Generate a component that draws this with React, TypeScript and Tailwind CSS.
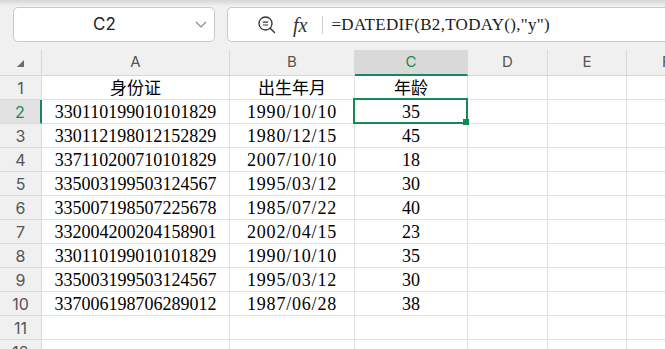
import React from 'react'

const rows = [
  ['330110199010101829', '1990/10/10', '35'],
  ['330112198012152829', '1980/12/15', '45'],
  ['337110200710101829', '2007/10/10', '18'],
  ['335003199503124567', '1995/03/12', '30'],
  ['335007198507225678', '1985/07/22', '40'],
  ['332004200204158901', '2002/04/15', '23'],
  ['330110199010101829', '1990/10/10', '35'],
  ['335003199503124567', '1995/03/12', '30'],
  ['337006198706289012', '1987/06/28', '38'],
]

const cols = ['A', 'B', 'C', 'D', 'E', 'F']

const serif = { fontFamily: '"Liberation Serif", "Noto Sans CJK SC", serif' }
const ui = { fontFamily: 'Inter, "Noto Sans", sans-serif' }

function RowHead({ n, active }: { n: number; active?: boolean }) {
  return (
    <div
      className={`h-[24px] border-b border-r border-[#dcdcdc] flex items-center justify-center text-[16px] ${
        active ? 'bg-[#e1e1e1] text-[#138a58] border-r-2 border-r-[#138a58]' : 'bg-[#f0f0f0] text-[#555]'
      }`}
      style={ui}
    >
      {n}
    </div>
  )
}

function Cell({ children, cjk, wide }: { children?: React.ReactNode; cjk?: boolean; wide?: boolean }) {
  return (
    <div
      className={`h-[24px] border-b border-r border-[#e1e1e1] bg-white text-center text-black whitespace-nowrap overflow-hidden pt-[2px] leading-[21px] ${
        cjk ? 'text-[17px]' : 'text-[18px]'
      } ${wide ? 'tracking-[0.8px]' : ''}`}
      style={serif}
    >
      {children}
    </div>
  )
}

export default function App() {
  return (
    <div className="w-[665px] h-[349px] overflow-hidden bg-[#f0f0f0] select-none">
      {/* formula bar */}
      <div className="h-[50px] flex items-start pt-[7px] bg-[linear-gradient(to_bottom,#d6d6d6_0px,#f0f0f0_6px)]">
        <div className="ml-[13px] w-[202px] h-[35px] bg-white border border-[#c9c9c9] rounded-[5px] flex items-center">
          <span className="flex-1 text-center text-[17px] text-[#222]" style={ui}>C2</span>
          <svg width="12" height="7" viewBox="0 0 12 7" className="mr-[7px]">
            <path d="M1 1l5 5 5-5" fill="none" stroke="#8a8a8a" strokeWidth="1.2" />
          </svg>
        </div>
        <div className="ml-[12px] flex-1 h-[35px] bg-white border border-r-0 border-[#c9c9c9] rounded-l-[5px] flex items-center">
          <svg width="20" height="20" viewBox="0 0 20 20" className="ml-[29px]">
            <circle cx="8.5" cy="8.5" r="6.5" fill="none" stroke="#333" strokeWidth="1.3" />
            <path d="M5.8 7.2h5.4M5.8 10h5.4" stroke="#333" strokeWidth="1.2" />
            <path d="M13.2 13.2l4.3 4.3" stroke="#333" strokeWidth="1.4" strokeLinecap="round" />
          </svg>
          <span className="ml-[16px] italic text-[20px] text-[#333] leading-none" style={{ fontFamily: '"Liberation Serif", serif' }}>
            fx
          </span>
          <div className="ml-[15px] w-px h-[18px] bg-[#cfcfcf]" />
          <span className="ml-[8px] text-[17px] tracking-[0.3px] text-[#1a1a1a] whitespace-nowrap" style={serif}>
            =DATEDIF(B2,TODAY(),"y")
          </span>
        </div>
      </div>

      {/* sheet */}
      <div className="relative">
        <div className="grid grid-cols-[42px_188px_125px_113px_80px_79px_80px]">
          {/* header row */}
          <div className="h-[26px] border-b border-r border-[#d6d6d6] bg-[#f0f0f0] flex items-end justify-end pr-[17px] pb-[8px]">
            <svg width="7" height="7" viewBox="0 0 7 7">
              <polygon points="7,0 7,7 0,7" fill="#6b6b6b" />
            </svg>
          </div>
          {cols.map(c => (
            <div
              key={c}
              className={`h-[26px] border-r border-[#d9d9d9] flex items-center justify-center text-[15px] ${
                c === 'C'
                  ? 'bg-[#d9d9d9] text-[#138a58] border-b-2 border-b-[#138a58]'
                  : 'bg-[#f0f0f0] text-[#555] border-b border-b-[#d6d6d6]'
              }`}
              style={ui}
            >
              {c}
            </div>
          ))}

          {/* row 1 */}
          <RowHead n={1} />
          <Cell cjk>身份证</Cell>
          <Cell cjk>出生年月</Cell>
          <Cell cjk>年龄</Cell>
          <Cell />
          <Cell />
          <Cell />

          {rows.map((r, i) => (
            <React.Fragment key={i}>
              <RowHead n={i + 2} active={i === 0} />
              <Cell>{r[0]}</Cell>
              <Cell wide>{r[1]}</Cell>
              <Cell>{r[2]}</Cell>
              <Cell />
              <Cell />
              <Cell />
            </React.Fragment>
          ))}

          {[11, 12].map(n => (
            <React.Fragment key={n}>
              <RowHead n={n} />
              <Cell />
              <Cell />
              <Cell />
              <Cell />
              <Cell />
              <Cell />
            </React.Fragment>
          ))}
        </div>

        {/* selection on C2 */}
        <div className="absolute left-[353px] top-[48px] w-[115px] h-[26px] border-2 border-[#138a58] pointer-events-none">
          <div className="absolute right-[-3px] bottom-[-3px] w-[6px] h-[6px] bg-[#138a58]" />
        </div>
      </div>
    </div>
  )
}
